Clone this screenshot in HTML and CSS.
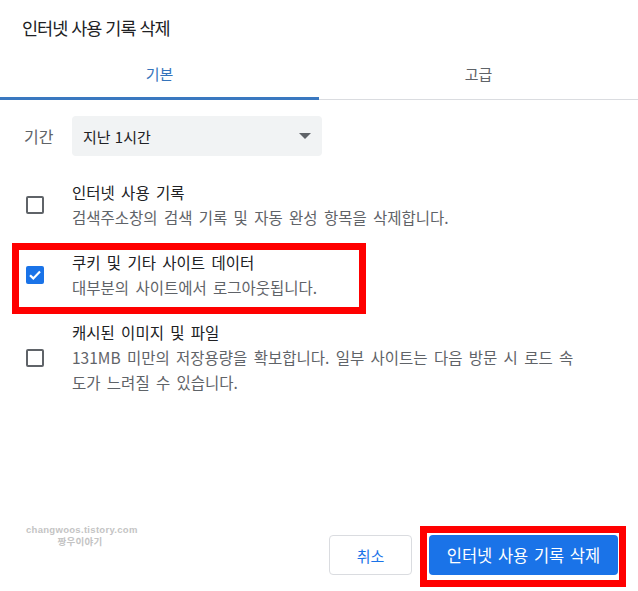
FILE: index.html
```html
<!DOCTYPE html>
<html lang="ko">
<head>
    <meta charset="UTF-8">
    <meta name="viewport" content="width=device-width, initial-scale=1.0">
    <title>인터넷 사용 기록 삭제</title>
    <link rel="stylesheet" href="styles.css">
</head>
<body>

<div class="dialog">
    <h1 class="title">인터넷 사용 기록 삭제</h1>

    <!-- Tabs -->
    <div class="tabs">
        <div class="tab active">기본</div>
        <div class="tab">고급</div>
    </div>

    <div class="content">
        <!-- Time range -->
        <div class="period">
            <span class="period-label">기간</span>
            <div class="select">
                <span>지난 1시간</span>
                <span class="arrow"></span>
            </div>
        </div>

        <!-- Options -->
        <div class="item">
            <div class="check-col"><span class="checkbox"></span></div>
            <div class="item-text">
                <div class="item-title">인터넷 사용 기록</div>
                <div class="item-desc">검색주소창의 검색 기록 및 자동 완성 항목을 삭제합니다.</div>
            </div>
        </div>

        <div class="item">
            <div class="check-col">
                <span class="checkbox checked">
                    <svg width="18" height="18" viewBox="0 0 18 18"><path d="M4 9.2l3.3 3.2L14 5.6" fill="none" stroke="#fff" stroke-width="2.2"/></svg>
                </span>
            </div>
            <div class="item-text">
                <div class="item-title">쿠키 및 기타 사이트 데이터</div>
                <div class="item-desc">대부분의 사이트에서 로그아웃됩니다.</div>
            </div>
        </div>

        <div class="item">
            <div class="check-col"><span class="checkbox"></span></div>
            <div class="item-text">
                <div class="item-title">캐시된 이미지 및 파일</div>
                <div class="item-desc">131MB 미만의 저장용량을 확보합니다. 일부 사이트는 다음 방문 시 로드 속도가 느려질 수 있습니다.</div>
            </div>
        </div>
    </div>

    <!-- Footer buttons -->
    <div class="footer">
        <button class="btn btn-cancel">취소</button>
        <button class="btn btn-primary">인터넷 사용 기록 삭제</button>
    </div>

    <!-- Watermark and highlight marks -->
    <div class="watermark">
        <div>changwoos.tistory.com</div>
        <div>짱우이야기</div>
    </div>
    <div class="mark mark-cookie"></div>
    <div class="mark mark-delete"></div>
</div>

</body>
</html>
```

FILE: styles.css
```css
/* Basic styling */
body { margin: 0; background-color: #ffffff; font-family: "Noto Sans CJK KR", "Noto Sans", sans-serif; color: #202124; }
.dialog {
    position: relative;
    width: 638px;
    height: 591px;
    display: flex;
    flex-direction: column;
    background-color: #ffffff;
}

/* Header */
.title {
    margin: 0 0 10px;
    padding: 16px 22px 0;
    font-size: 17.5px;
    font-weight: 400;
    line-height: 24px;
    letter-spacing: -1px;
    color: #202124;
}

/* Tabs */
.tabs { display: flex; border-bottom: 1px solid #dadce0; height: 49px; }
.tab {
    flex: 1;
    box-sizing: border-box;
    height: 50px;
    padding-bottom: 1px;
    border-bottom: 3px solid transparent;
    display: flex;
    align-items: center;
    justify-content: center;
    font-size: 15px;
    color: #5f6368;
}
.tab.active { color: #3574bb; border-bottom-color: #3a78c0; }

/* Content */
.content { padding: 16px 0 0 24px; }
.period { display: flex; align-items: center; gap: 16px; margin-bottom: 24px; }
.period-label { font-size: 16px; color: #5f6368; width: 32px; }
.select {
    box-sizing: border-box;
    width: 250px;
    height: 40px;
    padding: 0 10px 0 11px;
    display: flex;
    align-items: center;
    justify-content: space-between;
    background-color: #f1f3f4;
    border-radius: 4px;
    font-size: 15px;
}
.arrow {
    width: 0;
    height: 0;
    border-left: 6px solid transparent;
    border-right: 6px solid transparent;
    border-top: 6px solid #5f6368;
    margin-right: 1px;
}

/* Option items */
.item { display: flex; align-items: center; margin-bottom: 20px; }
.check-col { width: 48px; flex-shrink: 0; }
.checkbox {
    box-sizing: border-box;
    display: block;
    width: 18px;
    height: 18px;
    margin-left: 2px;
    border: 2px solid #5f6368;
    border-radius: 2px;
}
.checkbox.checked { border: none; background-color: #1a73e8; }
.checkbox svg { display: block; }
.item-text { width: 512px; font-size: 15.5px; line-height: 25px; word-spacing: 2px; }
.item-title { color: #202124; }
.item-desc { color: #5f6368; word-break: break-all; }

/* Footer */
.footer {
    margin-top: auto;
    padding: 0 20px 16px 0;
    display: flex;
    justify-content: flex-end;
    gap: 17px;
}
.btn {
    height: 40px;
    border-radius: 4px;
    font-family: inherit;
    cursor: pointer;
}
.btn-cancel { width: 83px; background-color: #ffffff; border: 1px solid #dadce0; color: #1a73e8; font-size: 15px; }
.btn-primary { width: 189px; background-color: #1a73e8; border: none; color: #ffffff; font-size: 16.5px; word-spacing: 1px; }

/* Watermark */
.watermark {
    position: absolute;
    left: 26px;
    top: 524px;
    width: 108px;
    text-align: center;
    font-family: "Liberation Sans", "Noto Sans CJK KR", sans-serif;
    font-size: 9.5px;
    font-weight: bold;
    line-height: 12px;
    letter-spacing: 0.3px;
    color: #c4c4c4;
}

/* Red highlight marks */
.mark { position: absolute; box-sizing: border-box; border: 7px solid #ff0000; }
.mark-cookie { left: 12px; top: 243px; width: 354px; height: 71px; }
.mark-delete { left: 420px; top: 526px; width: 206px; height: 61px; }
```
